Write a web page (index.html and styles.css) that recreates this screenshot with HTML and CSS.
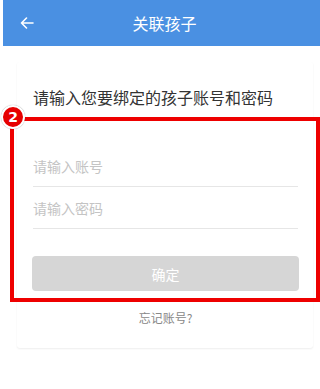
FILE: index.html
```html
<!DOCTYPE html>
<html lang="zh-CN">
<head>
<meta charset="utf-8">
<title>关联孩子</title>
<link rel="stylesheet" href="styles.css">
</head>
<body>
<header class="topbar">
  <span class="back">
    <svg width="14" height="12" viewBox="0 0 14 12"><path d="M13 6H1.5M6.5 1L1.5 6l5 5" fill="none" stroke="#fff" stroke-width="1.6" stroke-linecap="round" stroke-linejoin="round"/></svg>
  </span>
  <h1 class="title">关联孩子</h1>
</header>
<main class="card">
  <p class="heading">请输入您要绑定的孩子账号和密码</p>
  <div class="field"><input class="input" type="text" placeholder="请输入账号"></div>
  <div class="field"><input class="input" type="password" placeholder="请输入密码"></div>
  <button class="submit" type="button">确定</button>
  <p class="forgot">忘记账号?</p>
</main>
<div class="highlight"></div>
<div class="badge">2</div>
</body>
</html>
```
FILE: styles.css
```css
* { box-sizing: border-box; }
body {
  margin: 0;
  background: #fff;
  font-family: "Noto Sans CJK SC", "Noto Sans", sans-serif;
  position: relative;
  width: 320px;
  height: 389px;
  overflow: hidden;
}
.topbar {
  height: 46px;
  margin-left: 3px;
  background: #4a90e2;
  display: flex;
  align-items: center;
  position: relative;
}
.back {
  position: absolute;
  left: 17px;
  top: 17px;
  display: flex;
}
.title {
  margin: 0 auto;
  padding-left: 6px;
  font-size: 16px;
  font-weight: normal;
  color: #fff;
  line-height: 22px;
}
.card {
  margin: 16px 7px 0 17px;
  padding: 24px 15px 18px 16px;
  background: #fff;
  border-radius: 3px;
  box-shadow: 0 1px 2px rgba(0,0,0,0.07);
  height: 286px;
}
.heading {
  margin: 0;
  font-size: 16px;
  line-height: 22px;
  color: #333;
}
.field {
  height: 42px;
  border-bottom: 1px solid #e6e6e6;
  display: flex;
  align-items: center;
}
.field:first-of-type { margin-top: 37px; }
.input {
  border: 0;
  outline: 0;
  padding: 0;
  width: 100%;
  font-family: inherit;
  font-size: 14px;
  color: #333;
  background: transparent;
}
.input::placeholder { color: #c4c4c4; }
.submit {
  display: block;
  width: 267px;
  margin: 27px 0 0 -1px;
  height: 35px;
  border: 0;
  border-radius: 4px;
  background: #d6d6d6;
  color: #fff;
  font-family: inherit;
  font-size: 14px;
}
.forgot {
  margin: 18px 0 0;
  text-align: center;
  font-size: 12px;
  line-height: 17px;
  color: #888;
}
.highlight {
  position: absolute;
  left: 10px;
  top: 117px;
  width: 310px;
  height: 185px;
  border: 4px solid #ee0000;
}
.badge {
  position: absolute;
  left: 1px;
  top: 105px;
  width: 24px;
  height: 24px;
  border-radius: 50%;
  background: #e60000;
  border: 2px solid #fff;
  box-shadow: 0 0 1px rgba(0,0,0,0.4);
  color: #fff;
  font-family: "DejaVu Sans", sans-serif;
  font-weight: bold;
  font-size: 14px;
  line-height: 20px;
  text-align: center;
}
```
